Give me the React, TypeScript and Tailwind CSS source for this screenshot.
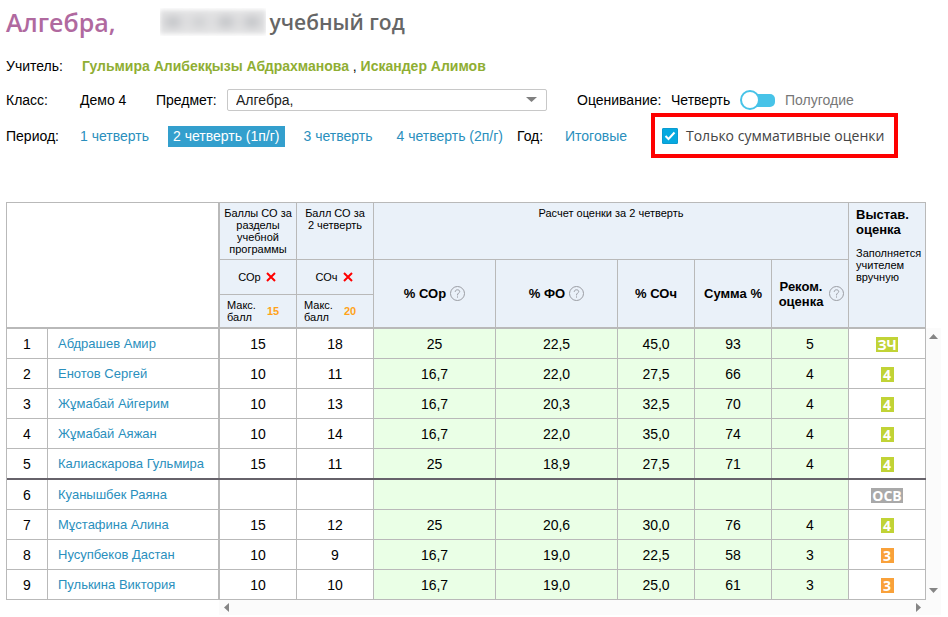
import clsx from "clsx";

type Student = {
  name: string;
  sor: string;
  soch: string;
  percents: string[];
  mark: string;
};

const students: Student[] = [
  { name: "Абдрашев Амир", sor: "15", soch: "18", percents: ["25", "22,5", "45,0", "93", "5"], mark: "ЗЧ" },
  { name: "Енотов Сергей", sor: "10", soch: "11", percents: ["16,7", "22,0", "27,5", "66", "4"], mark: "4" },
  { name: "Жұмабай Айгерим", sor: "10", soch: "13", percents: ["16,7", "20,3", "32,5", "70", "4"], mark: "4" },
  { name: "Жұмабай Аяжан", sor: "10", soch: "14", percents: ["16,7", "22,0", "35,0", "74", "4"], mark: "4" },
  { name: "Калиаскарова Гульмира", sor: "15", soch: "11", percents: ["25", "18,9", "27,5", "71", "4"], mark: "4" },
  { name: "Куанышбек Раяна", sor: "", soch: "", percents: ["", "", "", "", ""], mark: "ОСВ" },
  { name: "Мұстафина Алина", sor: "15", soch: "12", percents: ["25", "20,6", "30,0", "76", "4"], mark: "4" },
  { name: "Нусупбеков Дастан", sor: "10", soch: "9", percents: ["16,7", "19,0", "22,5", "58", "3"], mark: "3" },
  { name: "Пулькина Виктория", sor: "10", soch: "10", percents: ["16,7", "19,0", "25,0", "61", "3"], mark: "3" },
];

const markColors: Record<string, string> = {
  "ЗЧ": "bg-[#c1d336]",
  "4": "bg-[#c1d336]",
  "3": "bg-[#f9a13a]",
  "ОСВ": "bg-[#a9a9a9]",
};

const head = "border-r border-b border-[#b9b9b9] bg-[#eaf1f9] p-0";

function Help() {
  return (
    <button type="button" aria-label="Подсказка" className="shrink-0">
      <svg width="15" height="15" viewBox="0 0 15 15" fill="none" stroke="#9a9ca3">
        <circle cx="7.5" cy="7.5" r="7" />
        <path d="M5.3 6V5.6C5.3 4.5 6.2 3.8 7.5 3.8S9.7 4.5 9.7 5.6C9.7 7 7.5 7.1 7.5 9V9.4M7.5 10.4V11.6" />
      </svg>
    </button>
  );
}

function Cross() {
  return (
    <button type="button" aria-label="Удалить">
      <svg width="10" height="10" viewBox="0 0 10 10" stroke="#ff0000" strokeWidth="2">
        <path d="M1 1L9 9M9 1L1 9" />
      </svg>
    </button>
  );
}

function MaxScore({ value }: { value: string }) {
  return (
    <div className="flex items-center gap-[11px] pl-[7px] text-left text-[11px] leading-3">
      <span>
        Макс.
        <br />
        балл
      </span>
      <b className="text-[#ffa31a]">{value}</b>
    </div>
  );
}

function Header() {
  return (
    <header className="flex h-[43px] items-center font-['Open_Sans',sans-serif] font-semibold">
      <h1 className="text-[25px] leading-8 text-[#b0699f]">Алгебра,</h1>
      <div className="ml-[44px] flex h-7 w-[106px] items-center justify-center overflow-hidden">
        <div className="flex h-6 w-full items-center justify-around bg-[#e4e4e5] blur-[2px]">
          <span className="h-2 w-4 bg-[#b4b6ba] blur-[5px]" />
          <span className="h-2 w-4 bg-[#c6c7ca] blur-[5px]" />
          <span className="h-2 w-4 bg-[#b4b6ba] blur-[5px]" />
          <span className="h-2 w-4 bg-[#b4b6ba] blur-[5px]" />
        </div>
      </div>
      <h2 className="ml-1 text-[21px] leading-8 text-[#666666]">учебный год</h2>
    </header>
  );
}

function Filters() {
  return (
    <div>
      <div className="flex h-[46px] items-center">
        <span className="w-[76px]">Учитель:</span>
        <p>
          <a href="#" className="font-bold text-[#8fae33]">Гульмира Алибекқызы Абдрахманова</a>
          {" , "}
          <a href="#" className="font-bold text-[#8fae33]">Искандер Алимов</a>
        </p>
      </div>

      <div className="flex h-[22px] items-center">
        <span className="w-[74px]">Класс:</span>
        <span className="w-[76px]">Демо 4</span>
        <label htmlFor="subject" className="w-[71px]">Предмет:</label>
        <div className="relative w-80">
          <select id="subject" className="block h-[22px] w-full appearance-none rounded-xs border border-[#c8c8c8] bg-white pl-2 text-[#222222]">
            <option>Алгебра,</option>
          </select>
          <svg className="pointer-events-none absolute top-2 right-2.5" width="11" height="5" viewBox="0 0 11 5">
            <path d="M0 0H11L5.5 5Z" fill="#808080" />
          </svg>
        </div>
        <span className="ml-[30px] w-[94px]">Оценивание:</span>
        <label className="flex items-center">
          <span className="w-[69px]">Четверть</span>
          <input type="checkbox" role="switch" className="sr-only" />
          <svg width="35" height="20" viewBox="0 0 35 20">
            <rect x="10" y="4" width="25" height="13" rx="5" fill="#47c3e8" />
            <circle cx="10" cy="10" r="9" fill="#fff" stroke="#47c3e8" strokeWidth="2" />
          </svg>
          <span className="ml-2.5 text-[#777777]">Полугодие</span>
        </label>
      </div>

      <div className="mt-0.5 flex h-[45px] items-center">
        <span className="w-[69px]">Период:</span>
        <nav className="flex gap-[14px] pt-0.5 text-[#2a8fbd]">
          <a href="#" className="px-[5px] leading-[21px]">1 четверть</a>
          <a href="#" className="bg-[#339fcd] px-[5px] leading-[21px] text-white">2 четверть (1п/г)</a>
          <a href="#" className="px-[5px] leading-[21px]">3 четверть</a>
          <a href="#" className="px-[5px] leading-[21px]">4 четверть (2п/г)</a>
        </nav>
        <span className="ml-[9px] w-12">Год:</span>
        <a href="#" className="text-[#2a8fbd]">Итоговые</a>
        <label className="ml-6 flex h-full items-center gap-2 border-4 border-[#fe0000] pr-2.5 pl-[7px] font-['Open_Sans',sans-serif] text-[14px] whitespace-nowrap text-[#444444]">
          <span className="relative">
            <input type="checkbox" defaultChecked className="block size-4 appearance-none rounded-[1px] border border-[#0a9bd0] bg-[#06a9e0]" />
            <svg className="pointer-events-none absolute top-0 left-0" width="16" height="16" viewBox="0 0 16 16" fill="none" stroke="#fff" strokeWidth="2">
              <path d="M3.5 8L6.5 11L12.5 4.5" />
            </svg>
          </span>
          Только суммативные оценки
        </label>
      </div>
    </div>
  );
}

function GradesTable() {
  return (
    <table className="w-full table-fixed border-separate border-spacing-0 border-t border-l border-[#b9b9b9] text-center">
      <colgroup>
        <col className="w-[41px]" />
        <col className="w-[172px]" />
        <col className="w-[77px]" />
        <col className="w-[77px]" />
        <col className="w-[122px]" />
        <col className="w-[122px]" />
        <col className="w-[77px]" />
        <col className="w-[77px]" />
        <col className="w-[77px]" />
        <col className="w-[77px]" />
      </colgroup>
      <thead className="text-[13px] leading-[15px]">
        <tr className="h-[57px] text-[11px] leading-3">
          <td colSpan={2} rowSpan={3} className="border-r-2 border-b-2 border-[#b9b9b9]" />
          <th className={clsx(head, "pt-1 align-top font-normal")}>
            Баллы СО за разделы учебной программы
          </th>
          <th className={clsx(head, "pt-1 align-top font-normal")}>
            Балл СО за
            <br />2 четверть
          </th>
          <th colSpan={5} className={clsx(head, "pt-1 align-top font-normal")}>
            Расчет оценки за 2 четверть
          </th>
          <th rowSpan={3} className={clsx(head, "border-b-2 pt-1 pl-[7px] text-left align-top font-normal")}>
            <b className="block text-[13px] leading-[15px]">Выстав. оценка</b>
            <span className="mt-[10px] block">Заполняется учителем вручную</span>
          </th>
        </tr>
        <tr className="h-[35px]">
          <th className={clsx(head, "pr-0.5 text-[11px] font-normal")}>
            <span className="flex items-center justify-center gap-[5px]">СОр <Cross /></span>
          </th>
          <th className={clsx(head, "pr-0.5 text-[11px] font-normal")}>
            <span className="flex items-center justify-center gap-[5px]">СОч <Cross /></span>
          </th>
          <th rowSpan={2} className={clsx(head, "border-b-2")}>
            <span className="flex items-center justify-center gap-1">% СОр <Help /></span>
          </th>
          <th rowSpan={2} className={clsx(head, "border-b-2")}>
            <span className="flex items-center justify-center gap-1">% ФО <Help /></span>
          </th>
          <th rowSpan={2} className={clsx(head, "border-b-2")}>% СОч</th>
          <th rowSpan={2} className={clsx(head, "border-b-2")}>Сумма %</th>
          <th rowSpan={2} className={clsx(head, "border-b-2")}>
            <span className="flex items-center justify-center gap-1.5 pl-[3px]">
              <span>
                Реком.
                <br />
                оценка
              </span>
              <Help />
            </span>
          </th>
        </tr>
        <tr className="h-[34px]">
          <th className={clsx(head, "border-b-2 font-normal")}>
            <MaxScore value="15" />
          </th>
          <th className={clsx(head, "border-b-2 font-normal")}>
            <MaxScore value="20" />
          </th>
        </tr>
      </thead>
      <tbody>
        {students.map((student, i) => {
          // a thick dark line separates every group of five
          const last = i % 5 === 4;
          const first = i > 0 && i % 5 === 0;
          const cell = clsx(
            "border-r border-[#b9b9b9] p-0",
            last ? "border-b-2" : "border-b",
            first && "shadow-[0_-2px_#66626a]",
          );
          return (
            <tr key={student.name} className={last ? "h-[31px]" : "h-[30px]"}>
              <td className={cell}>{i + 1}</td>
              <td className={clsx(cell, "border-r-2 pl-2.5 text-left text-[13px] whitespace-nowrap")}>
                <a href="#" className="text-[#2a8fbd]">{student.name}</a>
              </td>
              <td className={cell}>{student.sor}</td>
              <td className={cell}>{student.soch}</td>
              {student.percents.map((value, j) => (
                <td key={j} className={clsx(cell, "bg-[#eaffe6]")}>{value}</td>
              ))}
              <td className={cell}>
                <span className={clsx("mt-0.5 inline-block min-w-[13px] px-px align-middle font-['Open_Sans',sans-serif] leading-[15px] font-bold text-white", markColors[student.mark])}>
                  {student.mark}
                </span>
              </td>
            </tr>
          );
        })}
      </tbody>
    </table>
  );
}

export default function App() {
  return (
    <div className="pl-1.5 pr-[7px] font-['Liberation_Sans',Arial,sans-serif] text-[14px] leading-4 text-black">
      <Header />
      <Filters />
      <main className="mt-11 flex">
        <div className="flex-1">
          <GradesTable />
          <div className="ml-[213px] flex h-[15px] items-center justify-between bg-[#fbfbfb] px-[5px]">
            <svg width="5" height="9" viewBox="0 0 5 9" fill="#858585">
              <path d="M5 0V9L0 4.5Z" />
            </svg>
            <svg width="5" height="9" viewBox="0 0 5 9" fill="#858585">
              <path d="M0 0V9L5 4.5Z" />
            </svg>
          </div>
        </div>
        <div className="mt-[126px] flex w-[15px] flex-col items-center justify-between bg-[#fbfbfb] pt-1.5 pb-[22px]">
          <svg width="9" height="5" viewBox="0 0 9 5" fill="#858585">
            <path d="M0 5H9L4.5 0Z" />
          </svg>
          <svg width="9" height="5" viewBox="0 0 9 5" fill="#858585">
            <path d="M0 0H9L4.5 5Z" />
          </svg>
        </div>
      </main>
    </div>
  );
}
